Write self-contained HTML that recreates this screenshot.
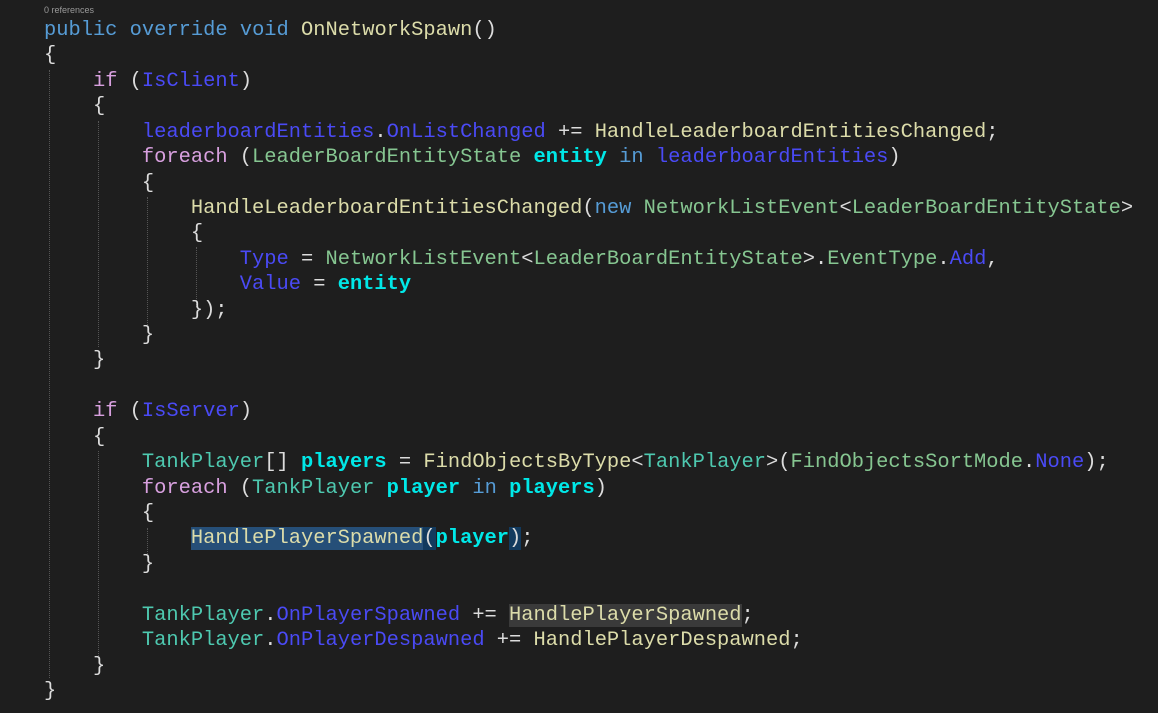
<!DOCTYPE html>
<html><head><meta charset="utf-8"><style>
html,body{margin:0;padding:0;background:#1e1e1e;width:1158px;height:713px;overflow:hidden}
.ref{position:absolute;left:44px;top:5px;font:9px "Liberation Sans",sans-serif;color:#999}
pre{position:absolute;left:44px;top:18px;margin:0;font:20.4px/25.42px "Liberation Mono",monospace;color:#dcdcdc;white-space:pre}
.k{color:#569cd6}.c{color:#d8a0df}.m{color:#dcdcaa}.t{color:#4ec9b0}.s{color:#86c691}.p{color:#4a4af5}.v{color:#00e8e8;font-weight:bold}
.sel{background:#264f78}.br{background:#123a5e}.hl{background:#3a3a3a}
.g{position:absolute;border-left:1px dotted #555;width:0}
</style></head><body>
<div class="ref">0 references</div>
<div class="g" style="left:49px;top:70px;height:608px"></div>
<div class="g" style="left:98px;top:121px;height:226px"></div>
<div class="g" style="left:147px;top:197px;height:130px"></div>
<div class="g" style="left:196px;top:247px;height:60px"></div>
<div class="g" style="left:98px;top:451px;height:205px"></div>
<div class="g" style="left:147px;top:528px;height:30px"></div>
<pre><span class="k">public</span> <span class="k">override</span> <span class="k">void</span> <span class="m">OnNetworkSpawn</span>()
{
    <span class="c">if</span> (<span class="p">IsClient</span>)
    {
        <span class="p">leaderboardEntities</span>.<span class="p">OnListChanged</span> += <span class="m">HandleLeaderboardEntitiesChanged</span>;
        <span class="c">foreach</span> (<span class="s">LeaderBoardEntityState</span> <span class="v">entity</span> <span class="k">in</span> <span class="p">leaderboardEntities</span>)
        {
            <span class="m">HandleLeaderboardEntitiesChanged</span>(<span class="k">new</span> <span class="s">NetworkListEvent</span>&lt;<span class="s">LeaderBoardEntityState</span>&gt;
            {
                <span class="p">Type</span> = <span class="s">NetworkListEvent</span>&lt;<span class="s">LeaderBoardEntityState</span>&gt;.<span class="s">EventType</span>.<span class="p">Add</span>,
                <span class="p">Value</span> = <span class="v">entity</span>
            });
        }
    }

    <span class="c">if</span> (<span class="p">IsServer</span>)
    {
        <span class="t">TankPlayer</span>[] <span class="v">players</span> = <span class="m">FindObjectsByType</span>&lt;<span class="t">TankPlayer</span>&gt;(<span class="s">FindObjectsSortMode</span>.<span class="p">None</span>);
        <span class="c">foreach</span> (<span class="t">TankPlayer</span> <span class="v">player</span> <span class="k">in</span> <span class="v">players</span>)
        {
            <span class="m sel">HandlePlayerSpawned</span><span class="br">(</span><span class="v">player</span><span class="br">)</span>;
        }

        <span class="t">TankPlayer</span>.<span class="p">OnPlayerSpawned</span> += <span class="m hl">HandlePlayerSpawned</span>;
        <span class="t">TankPlayer</span>.<span class="p">OnPlayerDespawned</span> += <span class="m">HandlePlayerDespawned</span>;
    }
}</pre>
</body></html>
